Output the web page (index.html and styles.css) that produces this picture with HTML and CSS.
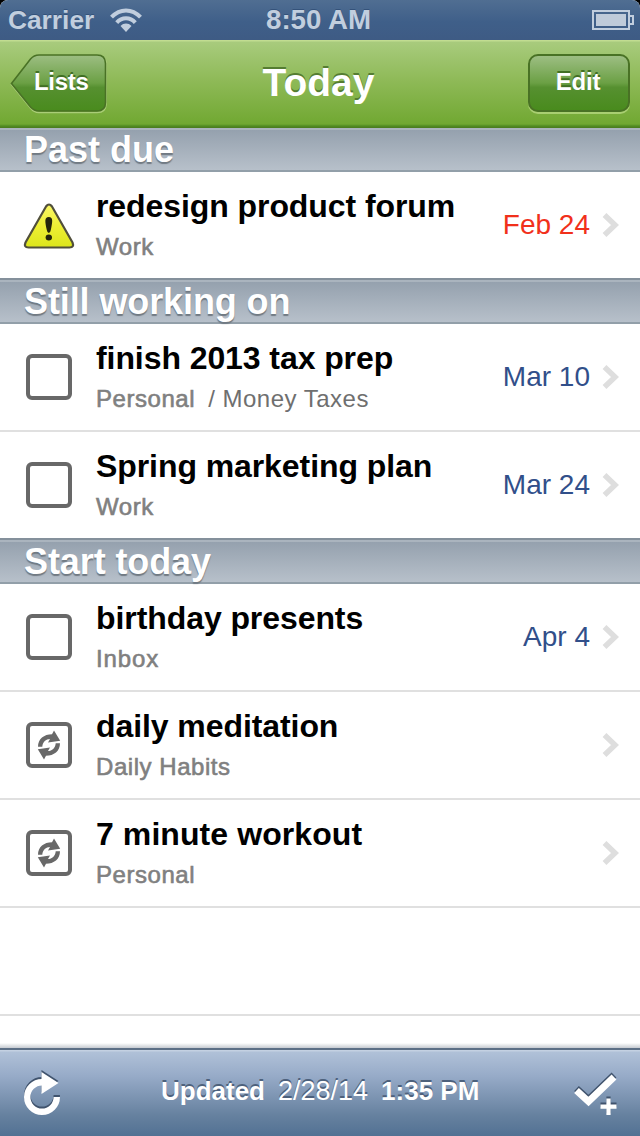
FILE: index.html
```html
<!DOCTYPE html>
<html lang="en">
<head>
<meta charset="utf-8">
<title>Today</title>
<link rel="stylesheet" href="styles.css">
</head>
<body>
<svg class="defs" width="0" height="0" aria-hidden="true">
  <defs>
    <linearGradient id="btn" x1="0" y1="0" x2="0" y2="1"><stop offset="0" stop-color="#9dbe83"/><stop offset=".5" stop-color="#6ba044"/><stop offset=".58" stop-color="#569030"/><stop offset="1" stop-color="#498b1d"/></linearGradient>
    <linearGradient id="warn" x1="0" y1="0" x2="0" y2="1"><stop offset="0" stop-color="#faf766"/><stop offset=".5" stop-color="#eeef35"/><stop offset="1" stop-color="#dce51b"/></linearGradient>
    <symbol id="chev" viewBox="0 0 18 26"><path d="M2.500 3 13 13 2.500 23" fill="none" stroke="#dedede" stroke-width="5.500"/></symbol>
    <symbol id="box" viewBox="0 0 46 46"><rect x="2" y="2" width="42" height="42" rx="4" fill="#fff" stroke="#686868" stroke-width="4"/></symbol>
    <symbol id="repeat" viewBox="0 0 46 46"><use href="#box"/>
      <g id="half" fill="#686868"><path d="M12 24.800C12 17 18 12.300 26 12.300L28 8.500 34.200 18.800 22 20.600 24 17C20 17 16.600 20 16.300 24.800Z"/></g>
      <use href="#half" transform="rotate(180 23 23)"/>
    </symbol>
  </defs>
</svg>
<div class="screen">
  <header class="status">
    <span class="carrier">Carrier</span>
    <svg class="wifi" width="32" height="24" viewBox="0 0 32 24"><g fill="none" stroke="#c1cede" stroke-width="4"><path d="M1.500 9.200C10 .2 22 .2 30.500 9.200"/><path d="M6.700 14.600C12 8.700 20 8.700 25.300 14.600"/></g><path d="M10.500 18C13.500 14.700 18.500 14.700 21.500 18L16 24Z" fill="#c1cede"/></svg>
    <span class="clock">8:50 AM</span>
    <svg class="battery" width="42" height="20" viewBox="0 0 42 20"><path d="M1 1H37V19H1Z M37 6H41V14H37" fill="none" stroke="#c1cede" stroke-width="2"/><rect x="4" y="4" width="30" height="12" fill="#bfcbda"/></svg>
  </header>
  <nav class="navbar">
    <div class="back">
      <svg width="98" height="60" viewBox="0 0 98 60"><path d="M1.500 30.500 20.500 6Q24 1.500 29 1.500H87Q96 1.500 96 10V50Q96 58.500 87 58.500H29Q24 58.500 20.500 54Z" fill="none" stroke="#c5df98" stroke-width="1.500" opacity=".65"/><path d="M1.500 29.500 20.500 5Q24 1 29 1H87Q95.500 1 95.500 9.500V48.500Q95.500 57 87 57H29Q24 57 20.500 53Z" fill="url(#btn)" stroke="#497225" stroke-width="1.600"/></svg>
      <span>Lists</span>
    </div>
    <h1>Today</h1>
    <div class="edit">Edit</div>
  </nav>
  <main>
    <h2 class="first">Past due</h2>
    <div class="row last">
      <svg class="warn" width="54" height="50" viewBox="0 0 54 50"><path d="M24 4.500Q27 .5 30 4.500L50.500 40.500Q52.500 45.500 47.500 45.500H6.500Q1.500 45.500 3.500 40.500Z" fill="url(#warn)" stroke="#514f3b" stroke-width="2.200"/><path d="M26.800 15C31.500 15 30.500 20 28.800 28Q28.300 31 26.800 31Q25.300 31 24.800 28C23.100 20 22.100 15 26.800 15Z" fill="#25250c"/><ellipse cx="26.800" cy="35.500" rx="3.200" ry="2.900" fill="#25250c"/></svg>
      <div class="text"><b>redesign product forum</b><span class="sub">Work</span></div>
      <time class="late">Feb 24</time><svg class="chev"><use href="#chev"/></svg>
    </div>
    <h2>Still working on</h2>
    <div class="row">
      <svg class="box"><use href="#box"/></svg>
      <div class="text"><b>finish 2013 tax prep</b><span class="sub">Personal<i>/ Money Taxes</i></span></div>
      <time>Mar 10</time><svg class="chev"><use href="#chev"/></svg>
    </div>
    <div class="row last">
      <svg class="box"><use href="#box"/></svg>
      <div class="text"><b>Spring marketing plan</b><span class="sub">Work</span></div>
      <time>Mar 24</time><svg class="chev"><use href="#chev"/></svg>
    </div>
    <h2>Start today</h2>
    <div class="row">
      <svg class="box"><use href="#box"/></svg>
      <div class="text"><b>birthday presents</b><span class="sub wide">Inbox</span></div>
      <time>Apr 4</time><svg class="chev"><use href="#chev"/></svg>
    </div>
    <div class="row">
      <svg class="box"><use href="#repeat"/></svg>
      <div class="text"><b>daily meditation</b><span class="sub">Daily Habits</span></div>
      <svg class="chev"><use href="#chev"/></svg>
    </div>
    <div class="row">
      <svg class="box"><use href="#repeat"/></svg>
      <div class="text"><b class="loose">7 minute workout</b><span class="sub">Personal</span></div>
      <svg class="chev"><use href="#chev"/></svg>
    </div>
    <div class="row"></div>
    <div class="fade"></div>
  </main>
  <footer class="toolbar">
    <svg class="refresh" width="40" height="48" viewBox="0 0 40 48"><path d="M19 12.200A14.800 14.800 0 1 0 33.800 27" fill="none" stroke="#fff" stroke-width="6.400"/><path d="M18.500 2 35.500 13 18.500 24Z" fill="#fff"/></svg>
    <p><strong>Updated</strong><span>2/28/14</span><strong>1:35 PM</strong></p>
    <svg class="add" width="46" height="46" viewBox="0 0 46 46"><path d="M2.500 18.500 14.500 29.500 40 5" fill="none" stroke="#fff" stroke-width="7"/><path d="M34.500 26.500V43M26.500 34.700H42.500" stroke="#fff" stroke-width="4.200"/></svg>
  </footer>
</div>
</body>
</html>
```
FILE: styles.css
```css
* { box-sizing: border-box; }
body { margin: 0; background: #000; font-family: "Liberation Sans", Arial, sans-serif; }
.defs { position: absolute; }
svg { display: block; flex: none; }
h1, h2, p { margin: 0; }
.screen { width: 640px; height: 1136px; display: flex; flex-direction: column; overflow: hidden; background: #fff; white-space: nowrap; }

.status { height: 40px; flex: none; display: grid; grid-template-columns: 102px 156px 1fr 48px; align-items: center; padding-left: 8px; color: #c1cede; font-weight: bold; font-size: 28px; background: linear-gradient(#506e92, #3f5f89 55%, #3e5b84); border-radius: 8px 8px 0 0; box-shadow: 0 -8px 0 8px #000; text-shadow: 0 -1px 0 #34527a; }
.carrier { font-size: 26.3px; }
.clock { font-size: 27.7px; }

.navbar { height: 88px; flex: none; display: grid; grid-template-columns: 96px 1fr 102px; padding: 14px 10px 0; color: #fff; background: linear-gradient(#c1dc91 0 1px, #a8cb7d 2px, #8fba58 45%, #71a832 84px, #518c22 86px, #4a791e 88px); z-index: 1; }
.back { display: grid; }
.back > * { grid-area: 1 / 1; }
.back span, .edit { font-size: 24px; line-height: 56px; font-weight: bold; text-shadow: 0 -2px 0 #416f24; }
.back span { padding-left: 24px; z-index: 1; letter-spacing: -.3px; }
.edit { height: 58px; text-align: center; border: 2px solid #497225; border-radius: 10px; line-height: 52px; background: linear-gradient(#9dbe83, #6ba044 50%, #569030 58%, #498b1d); box-shadow: 0 2px 0 #a9ce72; letter-spacing: -.2px; padding-right: 2px; }
h1 { font-size: 39px; line-height: 57px; text-align: center; padding-left: 3px; text-shadow: 0 -2px 0 #557d31; }

h2 { height: 46px; padding-left: 24px; color: #fff; font-size: 36px; line-height: 44px; letter-spacing: -.1px; border-top: 2px solid #84909b; border-bottom: 2px solid #929fa9; background: linear-gradient(#aab4be 0 2px, #95a1ae 2px, #b7c0ca); text-shadow: 0 2px 1px #717a83; }
h2.first { height: 44px; border-top: 0; line-height: 44px; letter-spacing: 0; }
.row { height: 108px; display: flex; align-items: center; border-bottom: 2px solid #e0e0e0; padding: 0 20px 0 26px; }
.row.last { height: 106px; border-bottom: 0; }
.box { width: 46px; height: 46px; }
.warn { margin: 4px -4px 0 -4px; }
.text { flex: 1; margin-left: 24px; display: flex; flex-direction: column; padding-top: 3px; }
b { font-size: 32px; line-height: 40px; height: 40px; letter-spacing: -.08px; }
.loose { letter-spacing: .08px; }
.sub { font-size: 24px; line-height: 41px; height: 41px; color: #808080; letter-spacing: .55px; -webkit-text-stroke: .6px #808080; }
.wide { letter-spacing: .9px; }
.sub i { font-style: normal; margin-left: 13px; letter-spacing: .5px; -webkit-text-stroke: 0; color: #6f6f6f; }
time { font-size: 28px; color: #314f8a; margin-right: 12px; }
time.late { color: #f1301b; }
.chev { width: 18px; height: 26px; }
.fade { height: 32px; background: linear-gradient(#fff 27px, #c5cad0); }

.toolbar { height: 88px; flex: none; display: grid; grid-template-columns: 138px 1fr 46px; padding: 0 20px 0 23px; border-top: 2px solid #5c6f86; background: linear-gradient(#c4d1e2 0 1px, #b0c1d8 2px, #97abc8 30%, #66819f 76%, #527193); color: #fff; }
.refresh { margin-top: 20px; }
.add { margin: 22px 0 0 0; }
.refresh, .add { filter: drop-shadow(0 -2px 0 #40536d); }
.toolbar p { display: flex; align-items: baseline; font-size: 26px; line-height: 82px; text-shadow: 0 -2px 0 #4d617c; }
.toolbar p span { font-size: 27px; margin: 0 13px 0 13px; }
```
